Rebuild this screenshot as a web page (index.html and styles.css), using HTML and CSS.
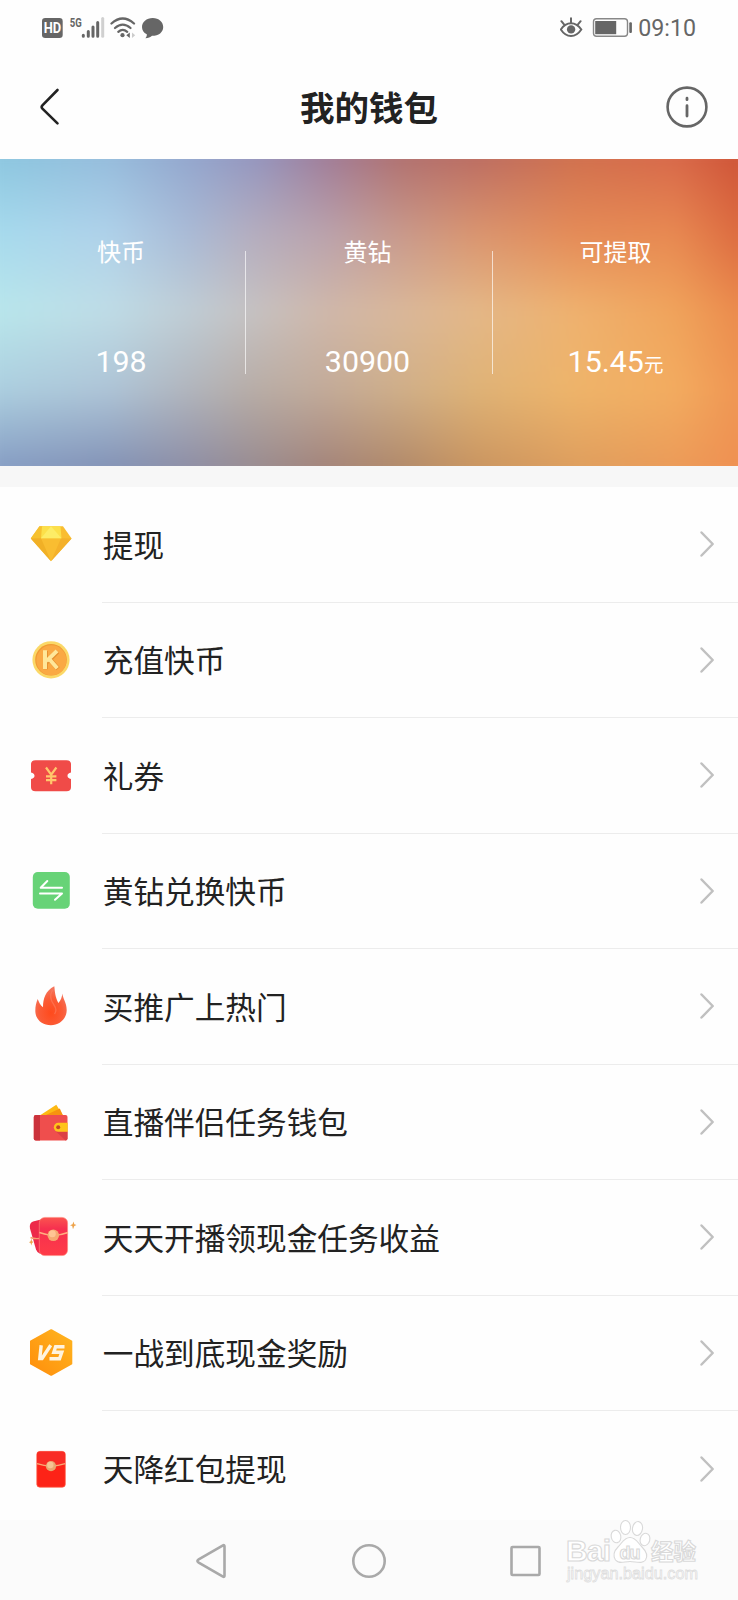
FILE: index.html
```html
<!DOCTYPE html>
<html lang="zh-CN">
<head>
<meta charset="utf-8">
<title>我的钱包</title>
<link rel="stylesheet" href="styles.css">
</head>
<body>
<div class="screen">
  <header class="status">
    <svg class="status-left" width="124" height="24" viewBox="41 16 124 24">
      <rect x="42" y="18" width="20.7" height="20" rx="3.2" fill="#666"/>
      <text x="52.4" y="33.3" text-anchor="middle" class="hd" textLength="17.5" lengthAdjust="spacingAndGlyphs">HD</text>
      <text x="69.7" y="26.6" class="fiveg" textLength="12" lengthAdjust="spacingAndGlyphs">5G</text>
      <g stroke="#666" stroke-width="3" stroke-linecap="round">
        <path d="M83.3 35.3V36.2M88.3 31.5V36.2M93 27V36.2M97.7 22.5V36.2"/>
        <path d="M102.7 18.5V36.2" stroke="#d0d0d0"/>
      </g>
      <g fill="none" stroke="#666" stroke-width="2.3" stroke-linecap="round">
        <path d="M111.5 23.5Q122.7 13.5 134 23.5"/>
        <path d="M115 28Q122.7 21.2 130.5 28"/>
        <path d="M118.3 31.8Q122.7 28 127.2 31.8"/>
      </g>
      <circle cx="122.5" cy="35.2" r="2.1" fill="#666"/>
      <path d="M126.3 35.2L129.8 32.5V38Z" fill="#666"/>
      <path d="M132 32.5L135.2 35.2L132 38Z" fill="#ccc"/>
      <path d="M152.7 18C159 18 163.2 22 163.2 27C163.2 32.3 158.8 35.8 152 35.8C150.5 37.3 148.2 38.2 145.4 38.2C146.5 37 147 35.8 146.8 34.3C143.6 32.8 142 30.2 142 27C142 22 146.5 18 152.7 18Z" fill="#666"/>
    </svg>
    <div class="status-right">
      <svg width="72" height="24" viewBox="560 16 72 24">
        <g fill="none" stroke="#666" stroke-width="2" stroke-linecap="round">
          <path d="M560.8 29.5Q565 23.3 571 23.3T581.3 29.5Q577 36 571 36T560.8 29.5Z"/>
          <path d="M571 22.5V18.3M564 24.3L561.4 21.2M578 24.3L580.6 21.2"/>
        </g>
        <circle cx="571.1" cy="29.4" r="4.2" fill="#666"/>
        <rect x="593.5" y="18.8" width="34" height="17.5" rx="3" fill="none" stroke="#888" stroke-width="1.4"/>
        <rect x="595.2" y="21" width="21" height="13.2" fill="#666"/>
        <rect x="629.3" y="22.3" width="2.6" height="10.7" rx="1" fill="#666"/>
      </svg>
      <span class="time">09:10</span>
    </div>
  </header>

  <div class="titlebar">
    <svg width="24" height="40" viewBox="0 0 24 40"><path d="M18.5 3L3.4 18.4Q1.9 20 3.4 21.6L18.5 36.4" fill="none" stroke="#222" stroke-width="2.6" stroke-linecap="round" stroke-linejoin="round"/></svg>
    <h1>我的钱包</h1>
    <svg width="42" height="42" viewBox="0 0 42 42"><circle cx="21" cy="21" r="19.4" fill="none" stroke="#666" stroke-width="2.6"/><path d="M21 12.2V13.7M21 19.7V30" stroke="#666" stroke-width="2.8" stroke-linecap="round"/></svg>
  </div>

  <section class="balance">
    <div class="backdrop">
      <div class="tones">
        <div class="tone tone-1"></div>
        <div class="tone tone-2"></div>
        <div class="tone tone-3"></div>
        <div class="tone tone-4"></div>
        <div class="tone tone-5"></div>
      </div>
    </div>
    <div class="stat"><span class="label">快币</span><span class="value">198</span></div>
    <div class="stat"><span class="label">黄钻</span><span class="value">30900</span></div>
    <div class="stat"><span class="label">可提取</span><span class="value">15.45<small>元</small></span></div>
  </section>

  <main class="menu">
    <div class="row">
      <svg class="icon" viewBox="0 0 48 48">
        <path d="M12.5 5.3H36L44.6 17.6L24 40.2L3.8 17.6Z" fill="#f9bd31"/>
        <path d="M12.5 5.3H16L14 17.3H3.8Z" fill="#f6c12f"/>
        <path d="M3.8 17.6L14 17.3L24 40.2Z" fill="#f1b026"/>
        <path d="M34 17.3L44.6 17.6L24 40.2Z" fill="#f4b12b"/>
        <path d="M15 5.3H33.5L34.5 17.3H14Z" fill="#fce04a"/>
        <path d="M24 5.3L34.5 17.3H14Z" fill="#fdec66"/>
      </svg>
      <div class="cell"><span>提现</span><svg class="chev" viewBox="0 0 18 28"><path d="M2.500 2.500L13.700 14L2.500 25.500"/></svg></div>
    </div>
    <div class="row">
      <svg class="icon" viewBox="0 0 48 48">
        <circle cx="24" cy="23.8" r="18.6" fill="#fbd867"/>
        <circle cx="24" cy="23.8" r="15.8" fill="#f09a35"/>
        <circle cx="24.4" cy="24.3" r="15" fill="#faa944"/>
        <path d="M18.6 15V33.2M30.6 15.5L20 26M22.8 23.3L31 32.8" stroke="#e58f2e" stroke-width="4.6" fill="none"/>
        <path d="M18 14.2V33M30 14.8L19.5 25.2M22 22.8L30.3 32.3" stroke="#ffe79a" stroke-width="4" fill="none"/>
      </svg>
      <div class="cell"><span>充值快币</span><svg class="chev" viewBox="0 0 18 28"><path d="M2.500 2.500L13.700 14L2.500 25.500"/></svg></div>
    </div>
    <div class="row">
      <svg class="icon" viewBox="0 0 48 48">
        <path d="M8.500 8.200H39.500Q44 8.200 44 12.200V20.500Q40.500 21.200 40.500 23.800T44 27V35.200Q44 39.200 39.500 39.200H8.500Q4 39.200 4 35.200V27Q7.500 26.300 7.500 23.800T4 20.500V12.200Q4 8.200 8.500 8.200Z" fill="#f04b48"/>
        <path d="M19 15.5L24.2 22.7L29.4 15.5M24.2 22.7V32.3M19 24.3H29.4M19 28.2H29.4" fill="none" stroke="#ffc86c" stroke-width="2.200"/>
      </svg>
      <div class="cell"><span>礼券</span><svg class="chev" viewBox="0 0 18 28"><path d="M2.500 2.500L13.700 14L2.500 25.500"/></svg></div>
    </div>
    <div class="row">
      <svg class="icon" viewBox="0 0 48 48">
        <rect x="5.8" y="5" width="37" height="36.8" rx="5" fill="#67d377"/>
        <path d="M20.3 14L13.7 20.8H35M13 26.5H35L28 32.8" fill="none" stroke="#fff" stroke-width="2" stroke-linecap="round" stroke-linejoin="round"/>
      </svg>
      <div class="cell"><span>黄钻兑换快币</span><svg class="chev" viewBox="0 0 18 28"><path d="M2.500 2.500L13.700 14L2.500 25.500"/></svg></div>
    </div>
    <div class="row">
      <svg class="icon" viewBox="0 0 48 48">
        <defs><radialGradient id="flame" cx=".5" cy=".68" r=".6"><stop offset="0" stop-color="#ff4a1c"/><stop offset=".6" stop-color="#fb5b36"/><stop offset="1" stop-color="#f4735a"/></radialGradient></defs>
        <path d="M27.3 3.3C28 9 28 14 31.4 20C34 17.500 35 14 35.3 10.6C36 16 39.8 20 39.7 27.2C39.5 36 32.5 42.2 23.9 42.2C15 42.2 8.5 36.5 8.3 28C8.3 23 9.2 19.5 10.7 16C12 19 13 22 16 24.200C16 16 18.500 7.500 27.3 3.3Z" fill="url(#flame)"/>
        <path d="M25.500 7C22 13 24 18 27 22C29.500 25.5 29 29 27.5 31" fill="none" stroke="#ff8568" stroke-width="1.3" opacity=".5"/>
      </svg>
      <div class="cell"><span>买推广上热门</span><svg class="chev" viewBox="0 0 18 28"><path d="M2.500 2.500L13.700 14L2.500 25.500"/></svg></div>
    </div>
    <div class="row">
      <svg class="icon" viewBox="0 0 48 48">
        <path d="M13.5 17L29.3 6.7L36 17.5Z" fill="#fdb913"/>
        <path d="M19 17L32.8 10.5L36 17.5Z" fill="#f7930f"/>
        <rect x="6.8" y="17" width="33.700" height="25.5" rx="2" fill="#ef4e4d"/>
        <path d="M8.8 17H13V42.5H8.8Q6.8 42.5 6.8 40.5V19Q6.8 17 8.8 17Z" fill="#cb323c"/>
        <path d="M29 33.5H40.5V40.5Q40.5 42.5 38.5 42.5Z" fill="#dc4046"/>
        <path d="M31.4 24.7H40.7V33.8H31.4A4.5 4.5 0 0 1 31.4 24.7Z" fill="#fec41b"/>
        <circle cx="31.2" cy="29.3" r="2" fill="#c64525"/>
      </svg>
      <div class="cell"><span>直播伴侣任务钱包</span><svg class="chev" viewBox="0 0 18 28"><path d="M2.500 2.500L13.700 14L2.500 25.500"/></svg></div>
    </div>
    <div class="row">
      <svg class="icon" viewBox="0 0 48 48">
        <defs><linearGradient id="packet" x2="0" y2="1"><stop stop-color="#fb544f"/><stop offset=".3" stop-color="#f6304f"/><stop offset="1" stop-color="#ff3b47"/></linearGradient></defs>
        <path d="M6 7.500L18 4.500V41L13 39.8Q10 38.5 9 35.5L3 14.500Q2 9 6 7.500Z" fill="#ed2949"/>
        <path d="M3.500 23.500Q7 25 12.500 24.500" fill="none" stroke="#f6a072" stroke-width="1.5"/>
        <rect x="12.3" y="3.4" width="28.3" height="38.2" rx="5.500" fill="url(#packet)" stroke="#ff8a7c" stroke-width=".6"/>
        <path d="M12.3 18.500Q27 24 41 18.500" fill="none" stroke="#ffae80" stroke-width="1.6"/>
        <circle cx="26.3" cy="21.3" r="5.8" fill="#f6aa72"/><circle cx="25.3" cy="19.8" r="3.5" fill="#ffc594"/>
        <path d="M46.5 7.5L47.3 10.3L49.5 11L47.3 12L46 15.2L45.2 12L43 11.3L45.5 10.2ZM4.3 24.5L5 27.3L6.5 28L5 29L4.3 31.5L3.6 29L2 28.3L3.6 27.3Z" fill="#eda34a"/>
      </svg>
      <div class="cell"><span>天天开播领现金任务收益</span><svg class="chev" viewBox="0 0 18 28"><path d="M2.500 2.500L13.700 14L2.500 25.500"/></svg></div>
    </div>
    <div class="row">
      <svg class="icon" viewBox="0 0 48 48">
        <defs><linearGradient id="hex" x1="1" x2="0" y2="1"><stop stop-color="#ffb51f"/><stop offset="1" stop-color="#ff8e0c"/></linearGradient></defs>
        <path d="M24.2 1.2L44.3 12.3V34.7L24.2 45.8L4 34.7V12.3Z" fill="url(#hex)" stroke="url(#hex)" stroke-width="2" stroke-linejoin="round"/>
        <path d="M14.200 16.3L12.800 29.500H15L23.700 16.3M37.500 17.800H28.6L26.800 23.200H34.800L32.500 29.800H22.500" fill="none" stroke="#fff3df" stroke-width="3.400"/>
      </svg>
      <div class="cell"><span>一战到底现金奖励</span><svg class="chev" viewBox="0 0 18 28"><path d="M2.500 2.500L13.700 14L2.500 25.500"/></svg></div>
    </div>
    <div class="row last">
      <svg class="icon" viewBox="0 0 48 48">
        <rect x="9.8" y="6.4" width="28.5" height="35.8" rx="3" fill="#fd2317" stroke="#ff6047" stroke-width=".7"/>
        <path d="M10 9.4Q10 6.4 13 6.4H35Q38 6.4 38 9.4V18.5Q24 24.5 10 18.5Z" fill="#f92c25"/>
        <path d="M10 18.7Q24 23.5 38.2 18.7" fill="none" stroke="#f9ab75" stroke-width="1.4"/>
        <circle cx="24" cy="21.2" r="5.1" fill="#e8a871"/><circle cx="23.3" cy="20" r="3.2" fill="#f6c594"/>
      </svg>
      <div class="cell"><span>天降红包提现</span><svg class="chev" viewBox="0 0 18 28"><path d="M2.500 2.500L13.700 14L2.500 25.500"/></svg></div>
    </div>
  </main>

  <footer class="navbar">
    <svg width="34" height="38" viewBox="0 0 34 38"><path d="M29 3.3Q30.5 2.5 30.5 4.5V33.5Q30.5 35.5 29 34.6L4.3 20.3Q2.5 19 4.3 17.7Z" fill="none" stroke="#a9a9a9" stroke-width="2.6"/></svg>
    <svg width="36" height="38" viewBox="0 0 36 38"><circle cx="18" cy="19" r="15.7" fill="none" stroke="#a9a9a9" stroke-width="2.6"/></svg>
    <svg width="34" height="38" viewBox="0 0 34 38"><rect x="2.500" y="5" width="28" height="28" rx="1" fill="none" stroke="#a9a9a9" stroke-width="2.6"/></svg>
    <svg class="watermark" width="140" height="72" viewBox="563 1515 140 72">
      <g fill="#fff" stroke="#d9d9d9" stroke-width="1.1">
        <ellipse cx="616" cy="1536.500" rx="4.8" ry="6.300" transform="rotate(-12 616 1536.500)"/>
        <ellipse cx="625.500" cy="1527.500" rx="5" ry="7"/>
        <ellipse cx="637.500" cy="1528.500" rx="5" ry="7" transform="rotate(10 637.500 1528.500)"/>
        <ellipse cx="645" cy="1539.500" rx="4.800" ry="6.300" transform="rotate(15 645 1539.500)"/>
        <path d="M630 1537.500C636 1537.500 638 1543 642 1547C647 1552 648 1556 645.500 1560C642 1564.500 636 1561.500 630 1561.500S619 1564.500 615.500 1560C613 1556 614 1551 618 1547C622 1543 624 1537.500 630 1537.500Z"/>
        <text x="566" y="1560.500" class="wm-bai" textLength="45">Bai</text>
        <text x="619.500" y="1558.500" class="wm-du" textLength="21">du</text>
        <text x="651" y="1560" class="wm-cn" textLength="45">经验</text>
      </g>
      <text x="567" y="1579" class="wm-url" textLength="131" lengthAdjust="spacingAndGlyphs">jingyan.baidu.com</text>
    </svg>
  </footer>
</div>
</body>
</html>
```
FILE: styles.css
```css
* { box-sizing: border-box; }
body {
  margin: 0;
  background: #fff;
  font-family: Roboto, "Noto Sans CJK SC", sans-serif;
  color: #222;
}
svg { display: block; flex: none; }
.screen {
  width: 738px;
  height: 1600px;
  overflow: hidden;
  display: flex;
  flex-direction: column;
  background: #fefefe;
}
.status {
  height: 55px;
  padding: 0 42px 0 41px;
  display: flex;
  justify-content: space-between;
  align-items: center;
}
.status-right { display: flex; align-items: center; gap: 6px; }
.time { font-size: 23.2px; line-height: 28px; color: #666; padding-top: 1px; }
.hd { font: bold 15px Roboto, sans-serif; fill: #fff; }
.fiveg { font: bold 12.5px Roboto, sans-serif; fill: #666; }
.titlebar {
  height: 104px;
  padding: 0 30px 0 39px;
  display: grid;
  grid-template-columns: 42px 1fr 42px;
  align-items: center;
}
.titlebar h1 {
  margin: 0;
  padding: 4px 9px 0 0;
  text-align: center;
  font-size: 34.5px;
  line-height: 50px;
  font-weight: 700;
}
.balance {
  position: relative;
  height: 307px;
  display: grid;
  grid-template-columns: 245px 247px 246px;
  align-items: center;
  color: #fff;
}
.backdrop { position: absolute; inset: 0; overflow: hidden; }
.tones { position: absolute; inset: -20px; filter: blur(10px); }
/* Horizontal colour bands, each fading into the one above it */
.tone { position: absolute; inset: 0; }
.tone-1 { background: linear-gradient(90deg, #8ac8e0 0%, #95bcdc 16.6%, #93a4cc 28%, #9494bd 36%, #a07c98 44.6%, #b0706f 54.2%, #bb6c62 63.8%, #d0704e 76.5%, #d8684a 89.3%, #cc4e32 100%); }
.tone-2 { background: linear-gradient(90deg, #a6dcee 0%, #b0d2ea 16.6%, #aabbd6 26.8%, #b5aebf 35%, #bba3ac 44.6%, #c99a8c 54.2%, #da9670 63.8%, #e58c58 76.5%, #e88a52 89.3%, #da643c 100%); mask-image: linear-gradient(transparent 4%, #000 28%); }
.tone-3 { background: linear-gradient(90deg, #b8e8ec 0%, #bfdce6 16.6%, #c0cdd5 26.8%, #c6c2c2 35%, #d0b8aa 44.6%, #dab89a 54.2%, #e4b888 63.8%, #efb26f 76.5%, #f0a45c 89.3%, #ea8549 100%); mask-image: linear-gradient(transparent 28%, #000 50%); }
.tone-4 { background: linear-gradient(90deg, #abcfe0 0%, #adc3d6 16.6%, #b0b4bc 26.8%, #b7aca6 35%, #c2aa98 44.6%, #cfae88 54.2%, #deb276 63.8%, #eeb46a 76.5%, #f3ac60 89.3%, #ee9050 100%); mask-image: linear-gradient(transparent 50%, #000 73%); }
.tone-5 { background: linear-gradient(90deg, #849cc4 0%, #8190b4 16.6%, #8c8ca4 26.8%, #978a90 35%, #a28278 44.6%, #b08868 54.2%, #c8935f 63.8%, #dd9d5d 76.5%, #eb9a58 89.3%, #f08d50 100%); mask-image: linear-gradient(transparent 73%, #000 96%); }
.stat {
  position: relative;
  height: 123px;
  display: flex;
  flex-direction: column;
  align-items: center;
  justify-content: space-between;
  padding-right: 3px;
}
.stat + .stat { border-left: 1px solid rgba(255, 255, 255, .65); }
.stat:last-child { padding-right: 0; }
.label { font-size: 24px; line-height: 32px; margin-top: -14px; }
.value { font-size: 30.4px; height: 36px; line-height: 36px; margin-bottom: -6px; }
.value small { font-size: 19.5px; line-height: 1; }
.menu {
  height: 1054px;
  border-top: 21px solid #f7f7f7;
  overflow: hidden;
}
.row {
  height: 115.5px;
  padding-left: 27px;
  display: flex;
  align-items: center;
  gap: 27px;
}
.icon { width: 48px; height: 48px; overflow: visible; }
.cell {
  flex: 1;
  height: 100%;
  padding-right: 21px;
  display: flex;
  align-items: center;
  justify-content: space-between;
  border-bottom: 1px solid #ececec;
  font-size: 30.65px;
  line-height: 44px;
}
.cell span { padding: 5px 0 0 .8px; }
.last .cell { border-bottom: 0; }
.chev { width: 18px; height: 28px; fill: none; stroke: #c0c0c0; stroke-width: 2.5; stroke-linecap: round; stroke-linejoin: round; }
.navbar {
  position: relative;
  height: 80px;
  padding: 2px 0 0 194px;
  display: flex;
  align-items: center;
  gap: 122.5px;
  background: #fbfbfb;
}
.watermark { position: absolute; left: 563px; top: -5px; }
.wm-bai { font: bold 30px "Liberation Sans", sans-serif; }
.wm-du { font: bold 18px "Liberation Sans", sans-serif; }
.wm-cn { font: bold 22.5px "Noto Sans CJK SC", sans-serif; }
.wm-url { font: 16px "Liberation Sans", sans-serif; fill: #fff; stroke: #dedede; stroke-width: .8; }
```
